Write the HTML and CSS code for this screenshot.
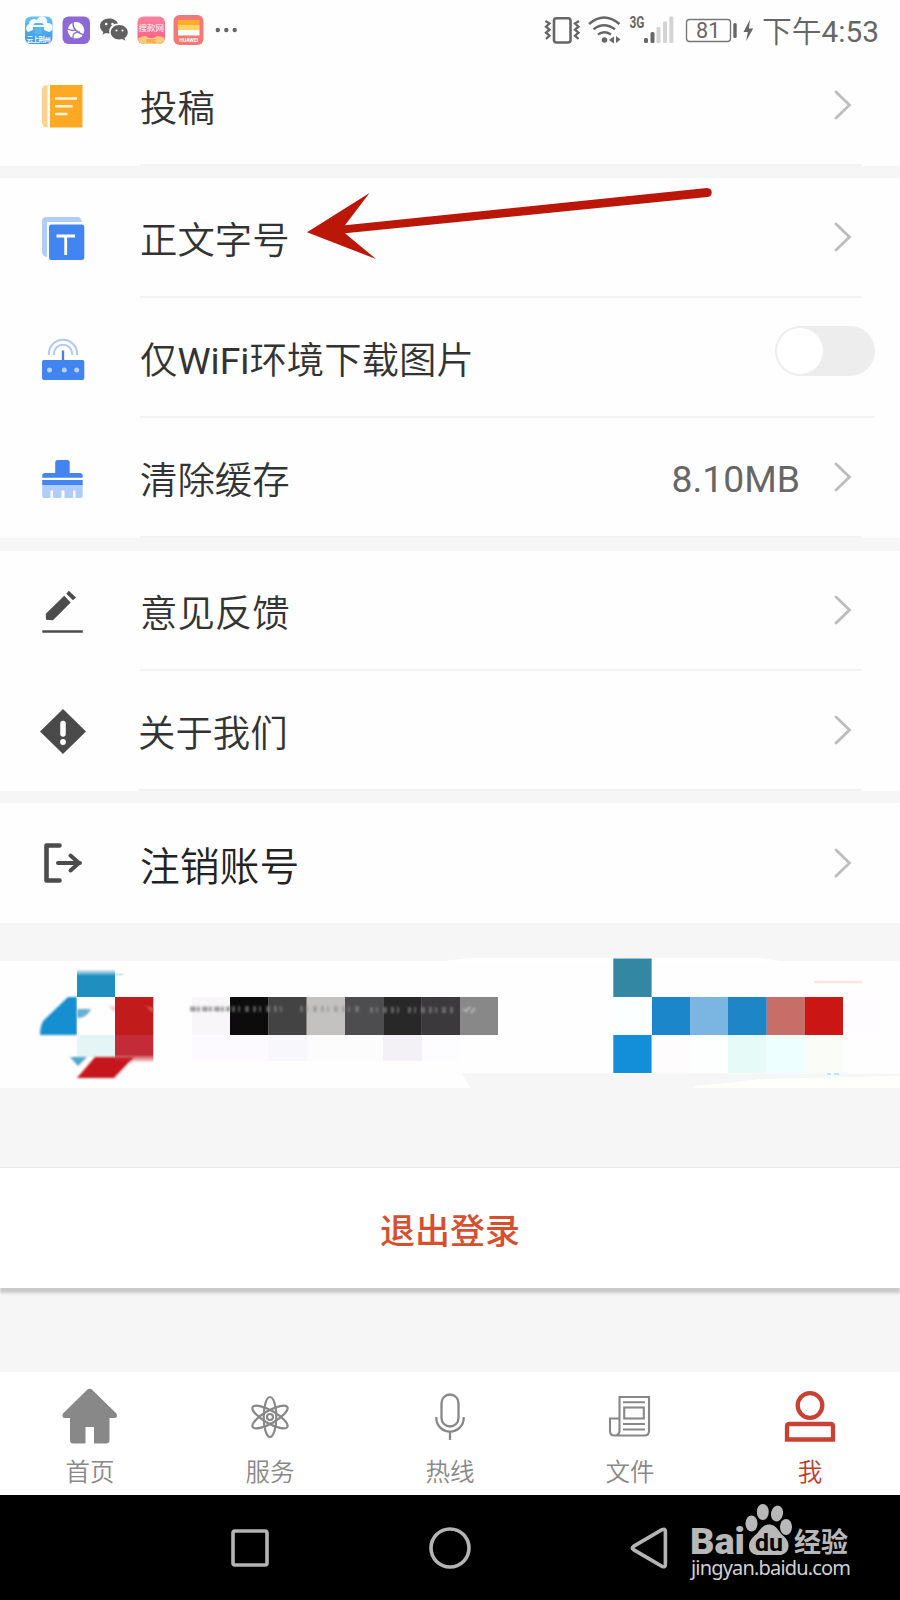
FILE: index.html
```html
<!DOCTYPE html>
<html lang="zh-CN">
<head>
    <meta charset="UTF-8">
    <meta name="viewport" content="width=device-width, initial-scale=1.0">
    <title>我</title>
    <link rel="stylesheet" href="styles.css">
</head>
<body>
    <svg class="defs" width="0" height="0">
        <symbol id="chevron" viewBox="0 0 20 32"><path d="M3 3 L16.500 16 L3 29" fill="none" stroke="#bdbdbd" stroke-width="2.800" stroke-linecap="round"/></symbol>
    </svg>

    <header class="status">
        <!-- 通知图标 -->
        <svg class="apps" width="240" height="32" viewBox="0 14 240 32">
            <defs>
                <linearGradient id="sky" x1="0" y1="0" x2="0" y2="1"><stop offset="0" stop-color="#63c3f2"/><stop offset="1" stop-color="#3996e8"/></linearGradient>
                <linearGradient id="pink" x1="0" y1="0" x2="0" y2="1"><stop offset="0" stop-color="#fb819d"/><stop offset="1" stop-color="#fa5a85"/></linearGradient>
            </defs>
            <rect x="25" y="16.500" width="27.500" height="27.500" rx="6" fill="url(#sky)"/>
            <path d="M28 32 a4.500 4.500 0 0 1 1-8 a5 5 0 0 1 8-4 a5 5 0 0 1 10 3 a4.500 4.500 0 0 1 2 9 l-5-2 v-3 h-11 v3z" fill="#f2fbff"/>
            <path d="M33 25 h11 l-2-2 h-7z M35 27 h7 v7 h-7z" fill="#5db5ee"/>
            <text x="38.700" y="41.500" font-size="6.500" font-weight="bold" fill="#fff" text-anchor="middle" textLength="24">云上荆州</text>
            <rect x="62.500" y="16.500" width="27.500" height="27.500" rx="6" fill="#8d69d6"/>
            <circle cx="76" cy="30.300" r="8.300" fill="#fff"/>
            <path d="M73 22 q-1 9 11 13 M68 29 q6 3 8 0 M73 38 q-1-6 7-6" fill="none" stroke="#8d69d6" stroke-width="1.300"/>
            <path d="M109 18.500 c-5 0-9 3.300-9 7.500 c0 2.500 1.300 4.500 3.300 5.900 l-.8 2.800 3.200-1.700 c1.300.4 2.600.5 3.800.4 c-1.500-6 3.500-10 8.400-9.800 c-.8-3-4.600-5.100-8.900-5.100z" fill="#606060"/>
            <path d="M119.300 25 c-4.900 0-8.600 3.300-8.600 7.200 c0 4 3.700 7.200 8.600 7.200 c1 0 2-.2 3-.4 l3 1.800 -.8-2.800 c2-1.400 3.300-3.500 3.300-5.800 c0-3.900-3.900-7.200-8.500-7.200z" fill="#606060"/>
            <g fill="#fff"><circle cx="106.200" cy="24" r="1.300"/><circle cx="112.500" cy="24" r="1.300"/><circle cx="116.500" cy="30.500" r="1.100"/><circle cx="122.500" cy="30.500" r="1.100"/></g>
            <rect x="137.500" y="16.500" width="27.500" height="27.500" rx="6" fill="url(#pink)"/>
            <path d="M138 38 q4-1.500 7-2 h13 q4 .5 6.500 2 q0 6-6 6 h-14 q-6 0-6.500-6z" fill="#fbcb78"/>
            <path d="M145 35.500 q6 5 13 0z" fill="#fa6088"/>
            <text x="151.200" y="31" font-size="8.500" fill="#fff" text-anchor="middle">搜款网</text>
            <text x="151.200" y="43" font-size="4.500" font-weight="bold" fill="#e9953b" text-anchor="middle">VVIC</text>
            <rect x="173.500" y="15" width="30" height="30" rx="6" fill="#f57878"/>
            <rect x="178" y="20" width="21.500" height="5" fill="#fbae2c"/>
            <rect x="178" y="25" width="21.500" height="5" fill="#fdd366"/>
            <rect x="178" y="30" width="21.500" height="5.500" fill="#fffdf5"/>
            <text x="188.700" y="41.700" font-size="5" font-weight="bold" fill="#fff" text-anchor="middle">HUAWEI</text>
            <g fill="#666"><circle cx="217.800" cy="30" r="2.200"/><circle cx="226.300" cy="30" r="2.200"/><circle cx="234.700" cy="30" r="2.200"/></g>
        </svg>
        <!-- 振动、WiFi、信号、电量 -->
        <svg class="signals" width="220" height="32" viewBox="540 14 220 32">
            <g fill="none" stroke="#666" stroke-width="2.300">
                <rect x="555" y="18.200" width="16.500" height="24.300" rx="2.500" stroke-width="2.600"/>
                <path d="M546.500 21 l4 2.500 -3.500 3.200 3.500 3 -3.500 3 3.500 3 -3.500 3.300 M580 21 l-4 2.500 3.500 3.200 -3.500 3 3.500 3 -3.500 3 3.500 3.300"/>
                <path d="M590 24 q15-13 30.500 0 M594.500 29.300 q10.500-8 21.500 0 M599 34.500 q6-4.500 13 0" stroke-width="2.500"/>
            </g>
            <circle cx="605.500" cy="40" r="2.800" fill="#666"/>
            <path d="M610 40 l5-3.500 v7z M621.500 39.500 l-4.500-3.500 v7z" fill="#666"/>
            <text x="630.500" y="28" font-size="16" font-weight="bold" fill="#666" textLength="15" lengthAdjust="spacingAndGlyphs">3G</text>
            <rect x="645" y="38" width="4" height="5" rx="1.500" fill="#666"/>
            <rect x="651.500" y="32" width="4" height="11" rx="1.500" fill="#666"/>
            <g fill="#d4d4d4"><rect x="657.500" y="27" width="4" height="16" rx="1"/><rect x="664" y="21.500" width="4" height="21.500" rx="1"/><rect x="670.300" y="16.500" width="4" height="26.500" rx="1"/></g>
            <rect x="687.500" y="19.500" width="44" height="22" rx="3" fill="none" stroke="#777" stroke-width="1.400"/>
            <text x="709.200" y="38" font-size="21.500" fill="#666" text-anchor="middle">81</text>
            <rect x="734.300" y="23" width="3.400" height="15" rx="1.500" fill="#666"/>
            <path d="M751 19.500 l-6.500 12.500 h4.300 l-1.600 9 7-12.500 h-4.300z" fill="#666"/>
        </svg>
        <span class="time">下午<b>4:53</b></span>
    </header>

    <main>
        <section class="group">
            <div class="row">
                <div class="icon"><svg width="48" height="48" viewBox="0 0 48 48"><path d="M7.500 3 q-5.500 0-5.500 5.500 v31.500 q0 5.500 5.500 5.500z" fill="#fbd28f"/><rect x="10" y="3" width="32.500" height="42.500" fill="#fea924"/><path d="M15 16.500 h22 M15 24.300 h17.500 M15 32 h12.500" stroke="#fff5df" stroke-width="2.600"/></svg></div>
                <div class="body"><span class="label">投稿</span><svg class="chevron"><use href="#chevron"/></svg></div>
            </div>
        </section>

        <section class="group">
            <div class="row">
                <div class="icon"><svg width="48" height="48" viewBox="0 -1 48 48"><path d="M6 2 h31 q4 0 5 5 h-35 v35 q-5-1-5-5 v-30.500 q0-4.500 4-4.500z" fill="#b0ccf7"/><rect x="9" y="9.500" width="35.300" height="35.500" rx="2.500" fill="#4285f0"/><path d="M16.500 21 h18.500 M25.700 21 v19" stroke="#fff" stroke-width="2.800" fill="none"/></svg></div>
                <div class="body"><span class="label">正文字号</span><svg class="chevron"><use href="#chevron"/></svg></div>
            </div>
            <div class="row wifi">
                <div class="icon"><svg width="48" height="48" viewBox="0 -1 48 48"><path d="M8.800 20 v-1 a14.200 14.200 0 0 1 28.400 0 v1 M13.800 20 v-1 a9.200 9.200 0 0 1 18.400 0 v1" fill="none" stroke="#b3caef" stroke-width="2"/><path d="M23 15.500 v12" stroke="#5081cf" stroke-width="2.400"/><rect x="2" y="25" width="42.300" height="20" rx="2" fill="#4285f0"/><g fill="#b9d2fb"><circle cx="9.500" cy="35" r="2.500"/><circle cx="24.300" cy="35" r="2.500"/><circle cx="36.700" cy="35" r="2.500"/></g></svg></div>
                <div class="body"><span class="label">仅<b>WiFi</b>环境下载图片</span><span class="switch"><i></i></span></div>
            </div>
            <div class="row">
                <div class="icon"><svg width="48" height="48" viewBox="0 -2 48 48"><path d="M15.200 17 v-10.500 q0-2.500 2.500-2.500 h9.500 q2.500 0 2.500 2.500 v10.500 h10 q3 0 3 3 v1.700 h-40.500 v-1.700 q0-3 3-3z" fill="#4285f0"/><rect x="2.200" y="24" width="40.500" height="5.300" fill="#4285f0"/><path d="M2.200 29 h40.500 v11 q0 2-2 2 h-5.200 v-7.500 h-2.500 v7.500 h-8.500 v-7.500 h-3 v7.500 h-8.500 v-7.500 h-2.500 v7.500 h-6.300 q-2 0-2-2z" fill="#b0ccf8"/></svg></div>
                <div class="body"><span class="label">清除缓存</span><span class="value">8.10MB</span><svg class="chevron"><use href="#chevron"/></svg></div>
            </div>
        </section>

        <section class="group feedback">
            <div class="row">
                <div class="icon"><svg width="48" height="48" viewBox="0 2 48 48"><path d="M5.800 28.800 L24.200 10.800 L30.700 17.600 L13 35.200 L6 34.800z M26.300 8.800 L28.800 5.700 L36 12.600 L33 15.200z" fill="#4c4c4c"/><path d="M2.300 46.500 h40.500" stroke="#4c4c4c" stroke-width="2.500"/></svg></div>
                <div class="body"><span class="label">意见反馈</span><svg class="chevron"><use href="#chevron"/></svg></div>
            </div>
            <div class="row about">
                <div class="icon"><svg width="48" height="48" viewBox="0 0 48 48"><path d="M23 2 L46 24.500 L23 47 L0 24.500z" fill="#4a4a4a"/><path d="M23 16.500 v10.500" stroke="#fff" stroke-width="5.500" stroke-linecap="round"/><circle cx="23" cy="35" r="2.900" fill="#fff"/></svg></div>
                <div class="body"><span class="label">关于我们</span><svg class="chevron"><use href="#chevron"/></svg></div>
            </div>
        </section>

        <section class="group">
            <div class="row cancel">
                <div class="icon"><svg width="48" height="48" viewBox="0 0 48 48"><path d="M19.500 6.500 h-13 v35 h13" fill="none" stroke="#4c4c4c" stroke-width="4.600" stroke-linecap="round" stroke-linejoin="round"/><path d="M18 24 h22 M30.500 16.500 L39 24 L30.500 31.500" fill="none" stroke="#4c4c4c" stroke-width="4" stroke-linecap="round"/></svg></div>
                <div class="body"><span class="label">注销账号</span><svg class="chevron"><use href="#chevron"/></svg></div>
            </div>
        </section>

        <!-- 马赛克横幅 -->
        <svg class="banner" width="900" height="127" viewBox="0 961 900 127">
            <defs>
                <filter id="soft" x="-10%" y="-40%" width="120%" height="180%"><feGaussianBlur stdDeviation="0.900"/></filter>
                <filter id="smudge" filterUnits="userSpaceOnUse" x="180" y="995" width="300" height="30"><feGaussianBlur stdDeviation="1.200"/></filter>
                <linearGradient id="fadeTop" x1="0" y1="0" x2="0" y2="1"><stop offset="0" stop-color="#1f8fbf" stop-opacity="0"/><stop offset=".25" stop-color="#1f8fbf"/></linearGradient>
                <linearGradient id="fadeRed" x1="0" y1="0" x2="0" y2="1"><stop offset=".7" stop-color="#c42b38"/><stop offset="1" stop-color="#c42b38" stop-opacity="0"/></linearGradient>
            </defs>
            <path d="M440 961.500 L468 958 H760 L785 961.500z" fill="#fff"/>
            <path d="M462 1073.500 H900 V1076 L760 1079 L690 1088 H470z" fill="#f6f6f6"/>
            <path d="M695 1086 L770 1079 L900 1076 V1088 H695z" fill="#fffffc"/>
            <rect x="77" y="969" width="38" height="28" fill="url(#fadeTop)"/>
            <path d="M115 973.500 h10 l-4 2 h-6z" fill="#cbe7f2"/>
            <path d="M77 997 h-9 L43 1021 q-3 6-3 14 h37z" fill="#168fd0" filter="url(#soft)"/>
            <rect x="77" y="997" width="38" height="38" fill="#fefefe"/>
            <path d="M77 1009 h14 q-4 9-14 9z" fill="#6aafd2" filter="url(#soft)"/>
            <path d="M109 1006 l6 1 v5z" fill="#efb6bc" filter="url(#soft)"/>
            <rect x="115" y="997" width="38.300" height="38" fill="#c21b1b"/>
            <path d="M146 1006 l7 2 v5z" fill="#d26068" filter="url(#soft)"/>
            <rect x="77" y="1035" width="38" height="22" fill="#e5f5f6"/>
            <path d="M70 1057 h17 l-9 9z" fill="#53a5cc" filter="url(#soft)"/>
            <path d="M95 1057 h39 l-20 21 h-37z" fill="#c5171b" filter="url(#soft)"/>
            <rect x="115" y="1035" width="38.300" height="28" fill="url(#fadeRed)"/>
            <rect x="192" y="997" width="38" height="38" fill="#f9f6fa"/>
            <rect x="192" y="1035" width="76" height="26" fill="#fcfaff"/>
            <rect x="268" y="1035" width="39" height="26" fill="#f8f7fb"/>
            <rect x="307" y="1035" width="76" height="26" fill="#fdfcfd"/>
            <rect x="383" y="1035" width="39" height="26" fill="#f3f1f5"/>
            <rect x="422" y="1035" width="38" height="26" fill="#fdfcff"/>
            <rect x="230" y="997" width="38.500" height="38" fill="#0c0c0c"/>
            <rect x="268.300" y="997" width="38.500" height="38" fill="#434344"/>
            <rect x="306.700" y="997" width="38.500" height="38" fill="#c3c2c0"/>
            <rect x="345" y="997" width="38.500" height="38" fill="#4d4d50"/>
            <rect x="383.300" y="997" width="38.500" height="38" fill="#282828"/>
            <rect x="421.700" y="997" width="38.500" height="38" fill="#3c393c"/>
            <rect x="460" y="997" width="38" height="38" fill="#888"/>
            <path d="M190 1009 h40" stroke="#8c8c8c" stroke-opacity=".8" stroke-width="5" stroke-dasharray="6 1 3 2" filter="url(#smudge)"/>
            <path d="M232 1009 h52 M300 1009 h60 M370 1010 h30 M408 1010 h48" stroke="#8c8c8c" stroke-opacity=".6" stroke-width="6" stroke-dasharray="3 3 2 5 4 4" filter="url(#smudge)"/>
            <path d="M463 1009 l3 2 4-4 M475 1008 l-4 5" stroke="#bbb" stroke-width="2" fill="none" filter="url(#smudge)"/>
            <rect x="613.300" y="958.500" width="38.300" height="38.500" fill="#3387a3"/>
            <rect x="613.300" y="997" width="38.300" height="38" fill="#fbffff"/>
            <rect x="613.300" y="1035" width="38.300" height="38" fill="#138fd9"/>
            <rect x="652" y="997" width="38.300" height="38" fill="#1b87ca"/>
            <rect x="690" y="997" width="38.300" height="38" fill="#7bb5e2"/>
            <rect x="728" y="997" width="38.800" height="38" fill="#1e86c6"/>
            <rect x="766.700" y="997" width="38.300" height="38" fill="#c86e69"/>
            <rect x="805" y="997" width="38.300" height="38" fill="#ca1715"/>
            <rect x="652" y="1035" width="38" height="38" fill="#fffcfe"/>
            <rect x="690" y="1035" width="38" height="38" fill="#fcfffe"/>
            <rect x="728" y="1035" width="38.500" height="38" fill="#e6faf8"/>
            <rect x="766.500" y="1035" width="38.500" height="38" fill="#edffff"/>
            <rect x="805" y="1035" width="38" height="38" fill="#f9fcf7"/>
            <rect x="843" y="997" width="38" height="38" fill="#fefcfe"/>
            <path d="M814 982 h48" stroke="#fbe2e3" stroke-width="2.500"/>
            <path d="M827 1074 h4 M834 1074 h5" stroke="#b5ecea" stroke-width="2"/>
        </svg>

        <button class="logout">退出登录</button>
    </main>

    <nav class="tabs">
        <a class="tab">
            <svg width="60" height="60" viewBox="60 1386 60 60"><path d="M87 1390 q2.700-2.400 5.400 0 l24 23.500 q2 4.500-2.400 4.500 h-4.500 v22 q0 3.500-3.500 3.500 h-12 v-16.500 h-8.500 v16.500 h-12 q-3.500 0-3.500-3.500 v-22 h-4.500 q-4.400 0-2.500-4.500z" fill="#888"/></svg>
            <span>首页</span>
        </a>
        <a class="tab">
            <svg width="60" height="60" viewBox="240 1386 60 60"><g fill="none" stroke="#888" stroke-width="2.200"><ellipse cx="270" cy="1417" rx="6.300" ry="20"/><ellipse cx="270" cy="1417" rx="6.300" ry="20" transform="rotate(60 270 1417)"/><ellipse cx="270" cy="1417" rx="6.300" ry="20" transform="rotate(120 270 1417)"/><circle cx="270" cy="1417" r="3"/></g></svg>
            <span>服务</span>
        </a>
        <a class="tab">
            <svg width="60" height="60" viewBox="420 1386 60 60"><g fill="none" stroke="#888" stroke-width="2.300"><rect x="441.500" y="1394.500" width="17" height="32" rx="8.500"/><path d="M436.300 1417 v1 a13.700 13.700 0 0 0 27.400 0 v-1 M450 1432 v8"/></g></svg>
            <span>热线</span>
        </a>
        <a class="tab">
            <svg width="60" height="60" viewBox="600 1386 60 60"><g fill="none" stroke="#888" stroke-width="2.100"><path d="M619.500 1432 v-35 h29.500 v34 q0 4.500-4.500 4.500 h-30 q-4.500 0-4.500-4.500 v-12.500 h9.500 M619.500 1430 q0 5.500-5 5.500"/><path d="M623 1402.300 h22 M623 1424 h22 M623 1429.500 h22"/><rect x="624.200" y="1407.500" width="19.600" height="11"/></g></svg>
            <span>文件</span>
        </a>
        <a class="tab active">
            <svg width="60" height="60" viewBox="780 1386 60 60"><g fill="none" stroke="#c84234" stroke-width="4.300"><circle cx="810" cy="1405.500" r="12.300"/><path d="M787 1439.500 v-13 q0-2.500 2.500-2.500 h41 q2.500 0 2.500 2.500 v13z"/></g></svg>
            <span>我</span>
        </a>
    </nav>

    <footer class="navbar">
        <svg width="44" height="44" viewBox="0 0 44 44"><rect x="5" y="5" width="34" height="34" rx="2"/></svg>
        <svg width="44" height="44" viewBox="0 0 44 44"><circle cx="22" cy="22" r="19"/></svg>
        <svg width="44" height="44" viewBox="0 0 44 44"><path d="M34 3.700 q3.400-1.500 3.400 1.800 v33 q0 3.300-3.400 1.800 l-28.500-16.700 q-2.400-1.600 0-3.200z"/></svg>
    </footer>

    <svg class="arrow" width="410" height="80" viewBox="304 186 410 80">
        <path d="M307 232.300 L369.500 193 L345 225.200 L707 188 q4.700.3 4.700 4.400 q0 4-4.200 4.600 L345 233.300 L376 259z" fill="#ba1708"/>
    </svg>

    <svg class="watermark" width="170" height="84" viewBox="686 1500 170 84">
        <g fill="#b8b8b8">
            <text x="690" y="1553.500" font-size="36" font-weight="900" textLength="55" lengthAdjust="spacingAndGlyphs">Bai</text>
            <ellipse cx="751.500" cy="1523.500" rx="6" ry="8"/>
            <ellipse cx="762.800" cy="1512" rx="6" ry="8"/>
            <ellipse cx="777" cy="1513.500" rx="6" ry="8" transform="rotate(12 777 1513.500)"/>
            <ellipse cx="786" cy="1527" rx="6" ry="8"/>
            <path d="M769 1524.500 c6 0 9 5 12 9 c4 4 8 7 7.500 13 c-.5 6-5 9-11 8.500 h-17 c-6 .5-11-2-11.500-8 c-.4-6 4-10 8-13.500 c3-4 6-9 12-9z"/>
            <text class="cn" x="794" y="1551.500" font-size="27.500" font-weight="bold" textLength="54" lengthAdjust="spacingAndGlyphs">经验</text>
        </g>
        <text x="755" y="1550.500" font-size="23" font-weight="bold" fill="#000" textLength="28" lengthAdjust="spacingAndGlyphs">du</text>
        <text class="url" x="691" y="1575" font-size="20" fill="#d2d2d2" textLength="160">jingyan.baidu.com</text>
    </svg>
</body>
</html>
```
FILE: styles.css
```css
body {
    position: relative;
    width: 900px;
    height: 1600px;
    margin: 0;
    overflow: hidden;
    background-color: #f6f6f6;
    font-family: Roboto, "Noto Sans CJK SC", sans-serif;
    color: #333;
}
svg {
    display: block;
    flex: none;
}
b {
    font-weight: 400;
}
.defs {
    position: absolute;
}

/* 状态栏 */
.status {
    box-sizing: border-box;
    height: 46px;
    padding: 14px 21px 0 0;
    display: flex;
    align-items: center;
    background-color: #fefefe;
}
.signals {
    margin-left: auto;
}
.time {
    margin-left: 3px;
    padding-top: 3px;
    font-size: 29.8px;
    line-height: 32px;
    font-weight: 350;
    color: #666;
    white-space: nowrap;
}

/* 设置列表 */
.group {
    margin-bottom: 12px;
    background-color: #fefefe;
}
.group:nth-of-type(2) {
    margin-bottom: 13px;
}
.group:nth-of-type(4) {
    margin-bottom: 38px;
}
.row {
    display: flex;
    height: 120px;
}
.icon {
    width: 100px;
    padding-left: 40px;
    display: flex;
    align-items: center;
}
.body {
    box-sizing: border-box;
    flex: 1;
    margin-right: 38px;
    padding-right: 9px;
    display: flex;
    align-items: center;
    border-bottom: 2px solid #f3f3f3;
}
.label {
    flex: 1;
    padding-top: 2px;
    font-size: 37.4px;
    font-weight: 350;
    white-space: nowrap;
}
.value {
    margin-right: 33px;
    padding-top: 4px;
    font-size: 37.3px;
    color: #666;
}
.chevron {
    width: 20px;
    height: 32px;
}
.wifi .body {
    margin-right: 25px;
    padding-right: 0;
}
.switch {
    box-sizing: border-box;
    width: 100px;
    height: 50px;
    margin-bottom: 13px;
    padding: 2px;
    border-radius: 25px;
    background-color: #ededed;
}
.switch i {
    display: block;
    width: 46px;
    height: 46px;
    border-radius: 50%;
    background-color: #fff;
}
.about .icon {
    width: 98px;
}
.cancel .body {
    border-bottom: none;
}
.cancel .label {
    padding-top: 0;
    font-size: 39.8px;
    color: #222;
}

.banner {
    overflow: visible;
    background-color: #fefefe;
}

/* 退出按钮 */
.logout {
    box-sizing: border-box;
    display: block;
    width: 900px;
    height: 121px;
    margin: 79px 0 84px;
    border: none;
    border-top: 1px solid #e8e8e8;
    background-color: #fff;
    box-shadow: 0 5px 3px #c8c8c8;
    font-family: inherit;
    font-size: 35px;
    font-weight: 500;
    color: #d6502f;
}

/* 底部标签 */
.tabs {
    display: flex;
    height: 123px;
    background-color: #fff;
}
.tab {
    flex: 1;
    padding-top: 14px;
    display: flex;
    flex-direction: column;
    align-items: center;
    font-size: 24.5px;
    font-weight: 350;
    color: #888;
}
.tab span {
    line-height: 30px;
    margin-top: 12px;
}
.tab.active {
    color: #c23a2c;
}

.navbar {
    height: 105px;
    padding: 0 228px;
    display: flex;
    align-items: center;
    justify-content: space-between;
    background-color: #000;
}
.navbar svg {
    fill: none;
    stroke: #b4b4b4;
    stroke-width: 3.6px;
}

/* 浮层 */
.arrow {
    position: absolute;
    left: 304px;
    top: 186px;
}
.watermark {
    position: absolute;
    left: 686px;
    top: 1500px;
}
.watermark .cn {
    font-family: "Noto Sans CJK SC", sans-serif;
}
.watermark .url {
    font-family: "Noto Sans", sans-serif;
}
```
